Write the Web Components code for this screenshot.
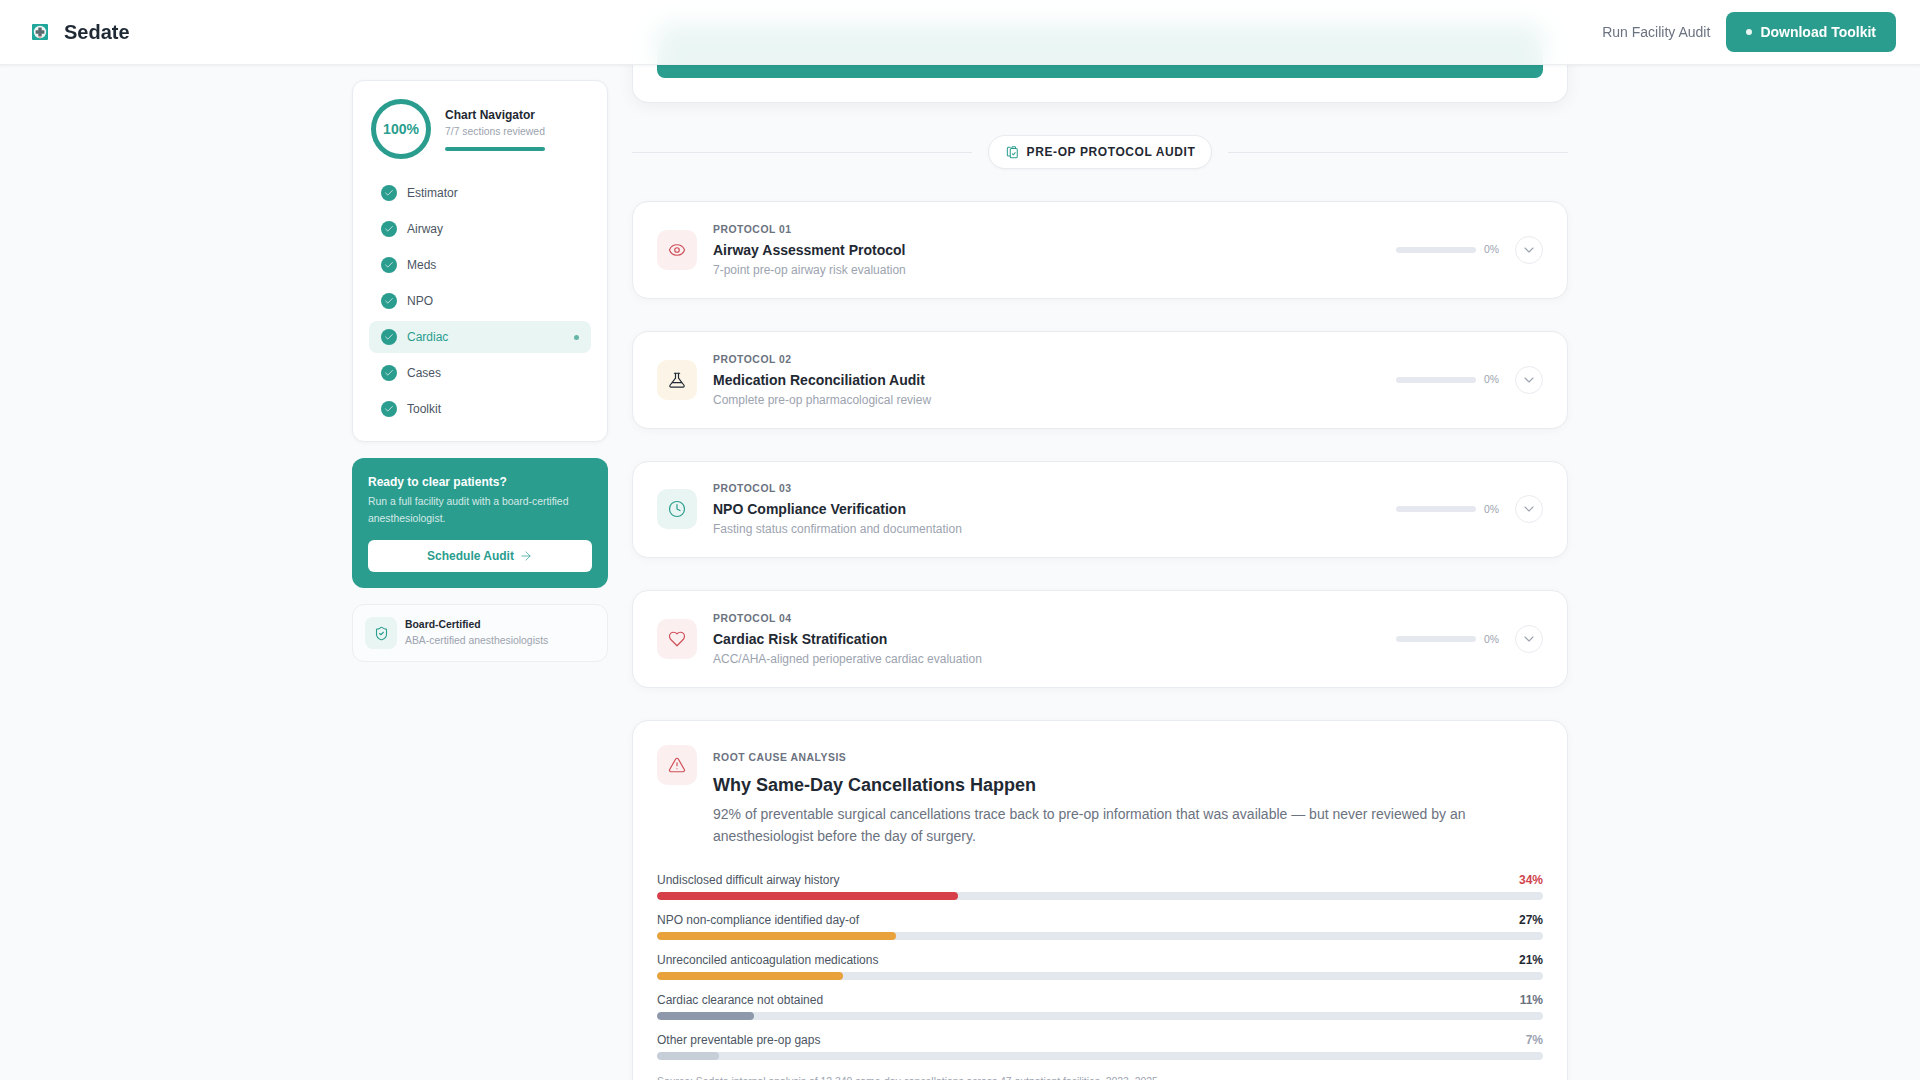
<!DOCTYPE html>
<html lang="en">
<head>
<meta charset="utf-8">
<title>Sedate</title>
<style>
  html, body { margin: 0; height: 100%; overflow: hidden; }
  body {
    background: #f8fafb;
    color: #1f2933;
    font-family: "Liberation Sans", Arial, sans-serif;
  }
  .page {
    display: grid;
    grid-template-columns: 256px 936px;
    gap: 24px;
    justify-content: center;
  }
  .side {
    display: flex;
    flex-direction: column;
    gap: 16px;
    padding-top: 80px;
  }
  .main {
    display: flex;
    flex-direction: column;
    gap: 32px;
  }
</style>
</head>
<body>
<app-nav></app-nav>
<div class="page">
  <div class="side">
    <chart-navigator percent="100%" sub="7/7 sections reviewed">
      <nav-item>Estimator</nav-item>
      <nav-item>Airway</nav-item>
      <nav-item>Meds</nav-item>
      <nav-item>NPO</nav-item>
      <nav-item active>Cardiac</nav-item>
      <nav-item>Cases</nav-item>
      <nav-item>Toolkit</nav-item>
    </chart-navigator>
    <cta-card></cta-card>
    <trust-card></trust-card>
  </div>
  <div class="main">
    <top-card></top-card>
    <section-divider>Pre-Op Protocol Audit</section-divider>
    <protocol-card num="01" icon="eye" tone="red" sub="7-point pre-op airway risk evaluation">Airway Assessment Protocol</protocol-card>
    <protocol-card num="02" icon="flask" tone="amber" sub="Complete pre-op pharmacological review">Medication Reconciliation Audit</protocol-card>
    <protocol-card num="03" icon="clock" tone="teal" sub="Fasting status confirmation and documentation">NPO Compliance Verification</protocol-card>
    <protocol-card num="04" icon="heart" tone="red" sub="ACC/AHA-aligned perioperative cardiac evaluation">Cardiac Risk Stratification</protocol-card>
    <analysis-card>
      <cause-bar pct="34" fill="#d63f47" val="#d0434c">Undisclosed difficult airway history</cause-bar>
      <cause-bar pct="27" fill="#e9a23b" val="#1f2933">NPO non-compliance identified day-of</cause-bar>
      <cause-bar pct="21" fill="#e9a23b" val="#1f2933">Unreconciled anticoagulation medications</cause-bar>
      <cause-bar pct="11" fill="#8d99ab" val="#6b7280">Cardiac clearance not obtained</cause-bar>
      <cause-bar pct="7" fill="#c6ced8" val="#9ca3af">Other preventable pre-op gaps</cause-bar>
    </analysis-card>
  </div>
</div>

<script>
const ICONS = {
  eye: '<path d="M2.062 12.348a1 1 0 0 1 0-.696 10.75 10.75 0 0 1 19.876 0 1 1 0 0 1 0 .696 10.75 10.75 0 0 1-19.876 0"/><circle cx="12" cy="12" r="3"/>',
  flask: '<path d="M10 3v6.500L2.700 19a1.500 1.500 0 0 0 1.300 2.400h16a1.500 1.500 0 0 0 1.300-2.400L14 9.500V3"/><path d="M8.500 3h7"/><path d="M6 15.500h12"/>',
  clock: '<circle cx="12" cy="12" r="10"/><polyline points="12 6 12 12 16 14"/>',
  heart: '<path d="M19 14c1.49-1.46 3-3.21 3-5.5A5.5 5.5 0 0 0 16.5 3c-1.76 0-3 .5-4.5 2-1.5-1.5-2.74-2-4.5-2A5.5 5.5 0 0 0 2 8.5c0 2.3 1.5 4.05 3 5.5l7 7Z"/>',
  alert: '<path d="m21.73 18-8-14a2 2 0 0 0-3.48 0l-8 14A2 2 0 0 0 4 21h16a2 2 0 0 0 1.73-3"/><path d="M12 9v4"/><path d="M12 17h.01"/>',
  shield: '<path d="M20 13c0 5-3.5 7.5-7.66 8.95a1 1 0 0 1-.67-.01C7.5 20.5 4 18 4 13V6a1 1 0 0 1 1-1c2 0 4.5-1.2 6.24-2.72a1.17 1.17 0 0 1 1.52 0C14.51 3.81 17 5 19 5a1 1 0 0 1 1 1z"/><path d="m9 12 2 2 4-4"/>',
  check: '<path d="M20 6 9 17l-5-5"/>',
  chevron: '<path d="m6 9 6 6 6-6"/>',
  arrow: '<path d="M5 12h14"/><path d="m12 5 7 7-7 7"/>',
  files: '<rect x="9" y="6" width="12" height="16" rx="2"/><path d="M12 6V4a1 1 0 0 1 1-1h4a1 1 0 0 1 1 1v2"/><path d="M9 19H6a2 2 0 0 1-2-2V6a2 2 0 0 1 2-2h3"/><path d="m12.5 15 1.8 1.8 3.2-3.6"/>'
};

function icon(name, size, stroke, width = 2) {
  return `<svg width="${size}" height="${size}" viewBox="0 0 24 24" fill="none" stroke="${stroke}" stroke-width="${width}" stroke-linecap="round" stroke-linejoin="round" style="display:block;flex:none">${ICONS[name]}</svg>`;
}

const TEAL = '#2a9d8f';
const TONES = {
  red: { bg: '#fbefef', stroke: '#cf4f58' },
  amber: { bg: '#fdf4e8', stroke: '#1f2933' },
  teal: { bg: '#e9f5f3', stroke: TEAL }
};

customElements.define('app-nav', class AppNav extends HTMLElement {
  constructor() {
    super();
    this.attachShadow({ mode: 'open' });
  }

  connectedCallback() {
    this.shadowRoot.innerHTML = `
      <style>
        :host {
          position: fixed;
          top: 0;
          left: 0;
          right: 0;
          z-index: 10;
          display: flex;
          align-items: center;
          justify-content: space-between;
          height: 65px;
          box-sizing: border-box;
          padding: 0 24px 0 32px;
          background: rgba(255, 255, 255, .9);
          backdrop-filter: blur(12px);
          border-bottom: 1px solid #eceff2;
          box-shadow: 0 1px 3px rgba(0, 0, 0, .05);
        }
        .brand {
          display: flex;
          align-items: center;
          gap: 16px;
          font-size: 20px;
          font-weight: 700;
          color: #1f2933;
        }
        .actions {
          display: flex;
          align-items: center;
          gap: 16px;
        }
        .link {
          font-size: 14px;
          color: #6b7280;
        }
        .btn {
          display: flex;
          align-items: center;
          gap: 8px;
          height: 40px;
          padding: 0 20px;
          border-radius: 8px;
          background: ${TEAL};
          color: #fff;
          font-size: 14px;
          font-weight: 700;
        }
        .dot {
          width: 6px;
          height: 6px;
          border-radius: 50%;
          background: #fff;
          opacity: .9;
        }
      </style>
      <div class="brand">
        <svg width="16" height="16" viewBox="0 0 16 16" style="display:block">
          <rect width="16" height="16" rx="1" fill="#1fa79b"/>
          <circle cx="8" cy="8" r="6.2" fill="#eef6f5"/>
          <path d="M6.3 3.6h3.4v2.7h2.7v3.4H9.7v2.7H6.3V9.700H3.600V6.300h2.700z" fill="#5d6b70"/>
          <rect x="6.800" y="12" width="2.400" height="2.200" fill="#d9a9a0"/>
        </svg>
        <span>Sedate</span>
      </div>
      <div class="actions">
        <span class="link">Run Facility Audit</span>
        <span class="btn"><span class="dot"></span>Download Toolkit</span>
      </div>
    `;
  }
});

customElements.define('chart-navigator', class ChartNavigator extends HTMLElement {
  constructor() {
    super();
    this.attachShadow({ mode: 'open' });
  }

  connectedCallback() {
    this.shadowRoot.innerHTML = `
      <style>
        :host {
          display: block;
          box-sizing: border-box;
          padding: 16px;
          background: #fff;
          border: 1px solid #e8ebef;
          border-radius: 12px;
          box-shadow: 0 1px 4px rgba(0, 0, 0, .04);
        }
        .head {
          display: flex;
          align-items: center;
          gap: 14px;
          padding: 2px;
          margin-bottom: 16px;
        }
        .ring {
          flex: none;
          display: flex;
          align-items: center;
          justify-content: center;
          box-sizing: border-box;
          width: 60px;
          height: 60px;
          border: 5px solid ${TEAL};
          border-radius: 50%;
          color: ${TEAL};
          font-size: 14px;
          font-weight: 700;
        }
        .title {
          font-size: 12px;
          font-weight: 700;
          line-height: 16px;
          color: #1f2933;
        }
        .sub {
          margin-top: 2px;
          font-size: 10.4px;
          line-height: 14px;
          color: #9ca3af;
        }
        .bar {
          height: 4px;
          margin-top: 8px;
          border-radius: 2px;
          background: ${TEAL};
        }
        .list {
          display: flex;
          flex-direction: column;
          gap: 4px;
        }
      </style>
      <div class="head">
        <div class="ring">${this.getAttribute('percent')}</div>
        <div>
          <div class="title">Chart Navigator</div>
          <div class="sub">${this.getAttribute('sub')}</div>
          <div class="bar"></div>
        </div>
      </div>
      <div class="list"><slot></slot></div>
    `;
  }
});

customElements.define('nav-item', class NavItem extends HTMLElement {
  constructor() {
    super();
    this.attachShadow({ mode: 'open' });
  }

  connectedCallback() {
    this.shadowRoot.innerHTML = `
      <style>
        :host {
          display: flex;
          align-items: center;
          gap: 10px;
          height: 32px;
          padding: 0 12px;
          border-radius: 8px;
          font-size: 12px;
          color: #4b5563;
        }
        :host([active]) {
          background: #e9f5f3;
          color: ${TEAL};
        }
        .tick {
          flex: none;
          display: flex;
          align-items: center;
          justify-content: center;
          width: 16px;
          height: 16px;
          border-radius: 50%;
          background: ${TEAL};
        }
        .label { flex: 1; }
        .dot {
          display: none;
          width: 5px;
          height: 5px;
          border-radius: 50%;
          background: #64b5a6;
        }
        :host([active]) .dot { display: block; }
      </style>
      <span class="tick">${icon('check', 10, 'rgba(255,255,255,.85)', 2)}</span>
      <span class="label"><slot></slot></span>
      <span class="dot"></span>
    `;
  }
});

customElements.define('cta-card', class CtaCard extends HTMLElement {
  constructor() {
    super();
    this.attachShadow({ mode: 'open' });
  }

  connectedCallback() {
    this.shadowRoot.innerHTML = `
      <style>
        :host {
          display: block;
          box-sizing: border-box;
          height: 130px;
          padding: 16px;
          border-radius: 12px;
          background: ${TEAL};
          color: #fff;
        }
        .title {
          font-size: 12px;
          font-weight: 700;
          line-height: 16px;
        }
        .text {
          margin: 3px 0 13px;
          font-size: 10.4px;
          line-height: 17px;
          color: rgba(255, 255, 255, .8);
        }
        .btn {
          display: flex;
          align-items: center;
          justify-content: center;
          gap: 5px;
          height: 32px;
          border-radius: 6px;
          background: #fff;
          color: ${TEAL};
          font-size: 12px;
          font-weight: 700;
        }
      </style>
      <div class="title">Ready to clear patients?</div>
      <div class="text">Run a full facility audit with a board-certified anesthesiologist.</div>
      <div class="btn">Schedule Audit ${icon('arrow', 14, TEAL, 1.25)}</div>
    `;
  }
});

customElements.define('trust-card', class TrustCard extends HTMLElement {
  constructor() {
    super();
    this.attachShadow({ mode: 'open' });
  }

  connectedCallback() {
    this.shadowRoot.innerHTML = `
      <style>
        :host {
          display: flex;
          align-items: center;
          gap: 8px;
          padding: 12px;
          background: #fbfcfd;
          border: 1px solid #eceff2;
          border-radius: 12px;
        }
        .box {
          flex: none;
          display: flex;
          align-items: center;
          justify-content: center;
          width: 32px;
          height: 32px;
          border-radius: 8px;
          background: #e9f5f3;
        }
        .title {
          font-size: 10.4px;
          font-weight: 700;
          line-height: 16px;
          color: #1f2933;
        }
        .sub {
          font-size: 10.4px;
          line-height: 16px;
          color: #9ca3af;
        }
      </style>
      <span class="box">${icon('shield', 15, TEAL, 1.75)}</span>
      <div>
        <div class="title">Board-Certified</div>
        <div class="sub">ABA-certified anesthesiologists</div>
      </div>
    `;
  }
});

customElements.define('top-card', class TopCard extends HTMLElement {
  constructor() {
    super();
    this.attachShadow({ mode: 'open' });
  }

  connectedCallback() {
    this.shadowRoot.innerHTML = `
      <style>
        :host {
          display: block;
          padding: 24px 24px 24px;
          background: #fff;
          border: 1px solid #e8ebef;
          border-top: 0;
          border-radius: 0 0 16px 16px;
          box-shadow: 0 4px 16px rgba(0, 0, 0, .05);
        }
        .bar {
          height: 54px;
          border-radius: 8px;
          background: ${TEAL};
        }
      </style>
      <div class="bar"></div>
    `;
  }
});

customElements.define('section-divider', class SectionDivider extends HTMLElement {
  constructor() {
    super();
    this.attachShadow({ mode: 'open' });
  }

  connectedCallback() {
    this.shadowRoot.innerHTML = `
      <style>
        :host {
          display: flex;
          align-items: center;
          gap: 16px;
        }
        .line {
          flex: 1;
          height: 1px;
          background: #e5e8ec;
        }
        .pill {
          display: flex;
          align-items: center;
          gap: 8px;
          padding: 8px 16px;
          background: #fff;
          border: 1px solid #e8ebef;
          border-radius: 17px;
          box-shadow: 0 1px 3px rgba(0, 0, 0, .04);
          font-size: 12px;
          font-weight: 700;
          line-height: 16px;
          letter-spacing: .05em;
          text-transform: uppercase;
          color: #1f2933;
        }
      </style>
      <span class="line"></span>
      <span class="pill">${icon('files', 14, TEAL, 1.75)}<slot></slot></span>
      <span class="line"></span>
    `;
  }
});

customElements.define('protocol-card', class ProtocolCard extends HTMLElement {
  constructor() {
    super();
    this.attachShadow({ mode: 'open' });
  }

  connectedCallback() {
    const tone = TONES[this.getAttribute('tone')];
    this.shadowRoot.innerHTML = `
      <style>
        :host {
          display: flex;
          align-items: center;
          gap: 16px;
          box-sizing: border-box;
          height: 97.8px;
          padding: 0 24px;
          background: #fff;
          border: 1px solid #e8ebef;
          border-radius: 16px;
          box-shadow: 0 2px 10px rgba(0, 0, 0, .03);
        }
        .box {
          flex: none;
          display: flex;
          align-items: center;
          justify-content: center;
          width: 40px;
          height: 40px;
          border-radius: 10px;
          background: ${tone.bg};
        }
        .text { flex: 1; }
        .label {
          font-size: 10.4px;
          font-weight: 700;
          line-height: 16px;
          letter-spacing: .05em;
          color: #6b7280;
        }
        .title {
          font-size: 14px;
          font-weight: 700;
          line-height: 20px;
          margin-top: 2px;
          color: #1f2933;
        }
        .sub {
          font-size: 12px;
          line-height: 16px;
          margin-top: 2px;
          color: #9ca3af;
        }
        .right {
          flex: none;
          display: flex;
          align-items: center;
          gap: 8px;
        }
        .track {
          width: 80px;
          height: 6px;
          border-radius: 3px;
          background: #e5e9ef;
        }
        .pct {
          width: 15px;
          margin-right: 8px;
          font-size: 10.4px;
          color: #9ca3af;
        }
        .toggle {
          display: flex;
          align-items: center;
          justify-content: center;
          box-sizing: border-box;
          width: 28px;
          height: 28px;
          border: 1px solid #e8ebef;
          border-radius: 50%;
        }
      </style>
      <span class="box">${icon(this.getAttribute('icon'), 18, tone.stroke, 1.6)}</span>
      <div class="text">
        <div class="label">PROTOCOL ${this.getAttribute('num')}</div>
        <div class="title"><slot></slot></div>
        <div class="sub">${this.getAttribute('sub')}</div>
      </div>
      <div class="right">
        <span class="track"></span>
        <span class="pct">0%</span>
        <span class="toggle">${icon('chevron', 16, '#9ca3af', 1.6)}</span>
      </div>
    `;
  }
});

customElements.define('analysis-card', class AnalysisCard extends HTMLElement {
  constructor() {
    super();
    this.attachShadow({ mode: 'open' });
  }

  connectedCallback() {
    this.shadowRoot.innerHTML = `
      <style>
        :host {
          display: block;
          padding: 24px;
          background: #fff;
          border: 1px solid #e8ebef;
          border-radius: 16px;
          box-shadow: 0 2px 10px rgba(0, 0, 0, .03);
        }
        .head {
          display: flex;
          align-items: flex-start;
          gap: 16px;
          margin-bottom: 25px;
        }
        .box {
          flex: none;
          display: flex;
          align-items: center;
          justify-content: center;
          width: 40px;
          height: 40px;
          border-radius: 10px;
          background: #fbefef;
        }
        .label {
          font-size: 10.4px;
          font-weight: 700;
          line-height: 16px;
          margin-top: 5px;
          letter-spacing: .05em;
          color: #6b7280;
        }
        .title {
          font-size: 18px;
          font-weight: 700;
          line-height: 28px;
          margin-top: 5px;
          color: #1f2933;
        }
        .text {
          font-size: 14px;
          line-height: 22px;
          margin-top: 4px;
          color: #6b7280;
        }
        .bars {
          display: flex;
          flex-direction: column;
          gap: 12px;
        }
        .source {
          margin-top: 14px;
          font-size: 10.4px;
          line-height: 16px;
          color: #9ca3af;
        }
      </style>
      <div class="head">
        <span class="box">${icon('alert', 18, '#cf4f58', 1.6)}</span>
        <div>
          <div class="label">ROOT CAUSE ANALYSIS</div>
          <div class="title">Why Same-Day Cancellations Happen</div>
          <div class="text">92% of preventable surgical cancellations trace back to pre-op information that was available — but never reviewed by an anesthesiologist before the day of surgery.</div>
        </div>
      </div>
      <div class="bars"><slot></slot></div>
      <div class="source">Source: Sedate internal analysis of 12,340 same-day cancellations across 47 outpatient facilities, 2023–2025</div>
    `;
  }
});

customElements.define('cause-bar', class CauseBar extends HTMLElement {
  constructor() {
    super();
    this.attachShadow({ mode: 'open' });
  }

  connectedCallback() {
    const pct = this.getAttribute('pct');
    this.shadowRoot.innerHTML = `
      <style>
        :host { display: block; }
        .row {
          display: flex;
          justify-content: space-between;
          margin-bottom: 4px;
          font-size: 12px;
          line-height: 16px;
          color: #4b5563;
        }
        .val {
          font-weight: 700;
          color: ${this.getAttribute('val')};
        }
        .track {
          height: 8px;
          border-radius: 4px;
          background: #e2e8ee;
          overflow: hidden;
        }
        .fill {
          width: ${pct}%;
          height: 100%;
          border-radius: 4px;
          background: ${this.getAttribute('fill')};
        }
      </style>
      <div class="row"><span><slot></slot></span><span class="val">${pct}%</span></div>
      <div class="track"><div class="fill"></div></div>
    `;
  }
});
</script>
</body>
</html>
